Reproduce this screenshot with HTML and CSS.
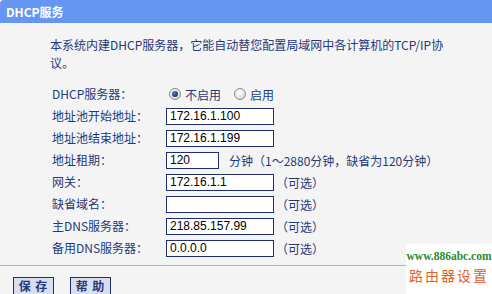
FILE: index.html
```html
<!DOCTYPE html>
<html lang="zh-CN">
<head>
<meta charset="utf-8">
<title>DHCP服务</title>
<link rel="stylesheet" href="styles.css">
</head>
<body>
<div class="page">
  <div class="header">DHCP服务</div>
  <div class="content">
    <p class="intro">本系统内建DHCP服务器，它能自动替您配置局域网中各计算机的TCP/IP协议。</p>
    <div class="form">
      <div class="label">DHCP服务器：</div>
      <div class="ctrl">
        <span class="opt"><span class="radio checked"></span>不启用</span>
        <span class="opt"><span class="radio"></span>启用</span>
      </div>
      <div class="label">地址池开始地址：</div>
      <div class="ctrl"><span class="field">172.16.1.100</span></div>
      <div class="label">地址池结束地址：</div>
      <div class="ctrl"><span class="field">172.16.1.199</span></div>
      <div class="label">地址租期：</div>
      <div class="ctrl"><span class="field short">120</span><span class="note lease">分钟（1～2880分钟，缺省为120分钟）</span></div>
      <div class="label">网关：</div>
      <div class="ctrl"><span class="field">172.16.1.1</span><span class="note">（可选）</span></div>
      <div class="label">缺省域名：</div>
      <div class="ctrl"><span class="field"></span><span class="note">（可选）</span></div>
      <div class="label">主DNS服务器：</div>
      <div class="ctrl"><span class="field">218.85.157.99</span><span class="note">（可选）</span></div>
      <div class="label">备用DNS服务器：</div>
      <div class="ctrl"><span class="field">0.0.0.0</span><span class="note">（可选）</span></div>
    </div>
  </div>
  <div class="divider"></div>
  <div class="actions">
    <span class="btn">保 存</span>
    <span class="btn">帮 助</span>
  </div>
  <div class="watermark">
    <div class="wm-url">www.886abc.com</div>
    <div class="wm-cn">路由器设置</div>
  </div>
</div>
</body>
</html>
```
FILE: styles.css
```css
html, body {
  margin: 0;
  padding: 0;
  background: #ffffff;
}
body {
  width: 492px;
  height: 294px;
  overflow: hidden;
  font-family: "Noto Sans CJK SC", "Liberation Sans", sans-serif;
  font-size: 12px;
  color: #24397a;
}
.page {
  position: relative;
  width: 492px;
  height: 294px;
  background: #f4f4f4;
  overflow: hidden;
}
.header {
  height: 23px;
  line-height: 23px;
  background: #6597f2;
  border-top-left-radius: 4px;
  color: #ffffff;
  font-weight: bold;
  font-size: 12px;
  padding-left: 6px;
}
.content {
  padding-left: 50px;
}
.intro {
  margin: 13px 0 0 0;
  width: 394px;
  line-height: 18px;
  word-break: break-all;
}
.form {
  margin-top: 11px;
  margin-left: 2px;
  display: grid;
  grid-template-columns: 114px auto;
  grid-auto-rows: 22px;
  align-items: center;
}
.label {
  line-height: 22px;
}
.ctrl {
  display: flex;
  align-items: center;
  height: 22px;
}
.opt {
  display: flex;
  align-items: center;
  margin-right: 10px;
}
.radio {
  width: 10px;
  height: 10px;
  border-radius: 50%;
  border: 1px solid #8c8c8c;
  background: radial-gradient(circle at 40% 35%, #ffffff 0%, #e4e4e4 55%, #c8c8c8 100%);
  margin: 0 4px 0 3px;
  position: relative;
}
.radio.checked::after {
  content: "";
  position: absolute;
  left: 2px;
  top: 2px;
  width: 6px;
  height: 6px;
  border-radius: 50%;
  background: radial-gradient(circle at 40% 35%, #5f7fb8 0%, #1a3462 70%);
}
.field {
  box-sizing: border-box;
  width: 108px;
  height: 17px;
  border: 1px solid #1f2f6e;
  background: #ffffff;
  font-family: "Liberation Sans", Arial, sans-serif;
  font-size: 12px;
  color: #000000;
  line-height: 15px;
  padding-left: 3px;
  white-space: nowrap;
  overflow: hidden;
}
.field.short {
  width: 53px;
}
.note {
  margin-left: 2px;
}
.note.lease {
  margin-left: 10px;
}
.divider {
  margin-top: 6px;
  height: 1px;
  background: #f0a35a;
}
.actions {
  display: flex;
  gap: 16px;
  padding: 11px 0 0 13px;
}
.btn {
  box-sizing: border-box;
  width: 41px;
  height: 18px;
  line-height: 16px;
  text-align: center;
  border: 1px solid #1f2f6e;
  background: #d8def0;
  color: #24397a;
  font-weight: bold;
  letter-spacing: 1px;
}
.watermark {
  position: absolute;
  right: 0;
  bottom: 0;
  width: 86px;
  height: 50px;
  background: #ffffff;
  text-align: center;
}
.wm-url {
  margin-top: 4px;
  font-family: "Liberation Serif", serif;
  font-weight: bold;
  font-size: 11.5px;
  color: #2c8a2c;
  line-height: 16px;
}
.wm-cn {
  font-size: 14px;
  line-height: 22px;
  color: #e2612a;
  letter-spacing: 2px;
}
```
